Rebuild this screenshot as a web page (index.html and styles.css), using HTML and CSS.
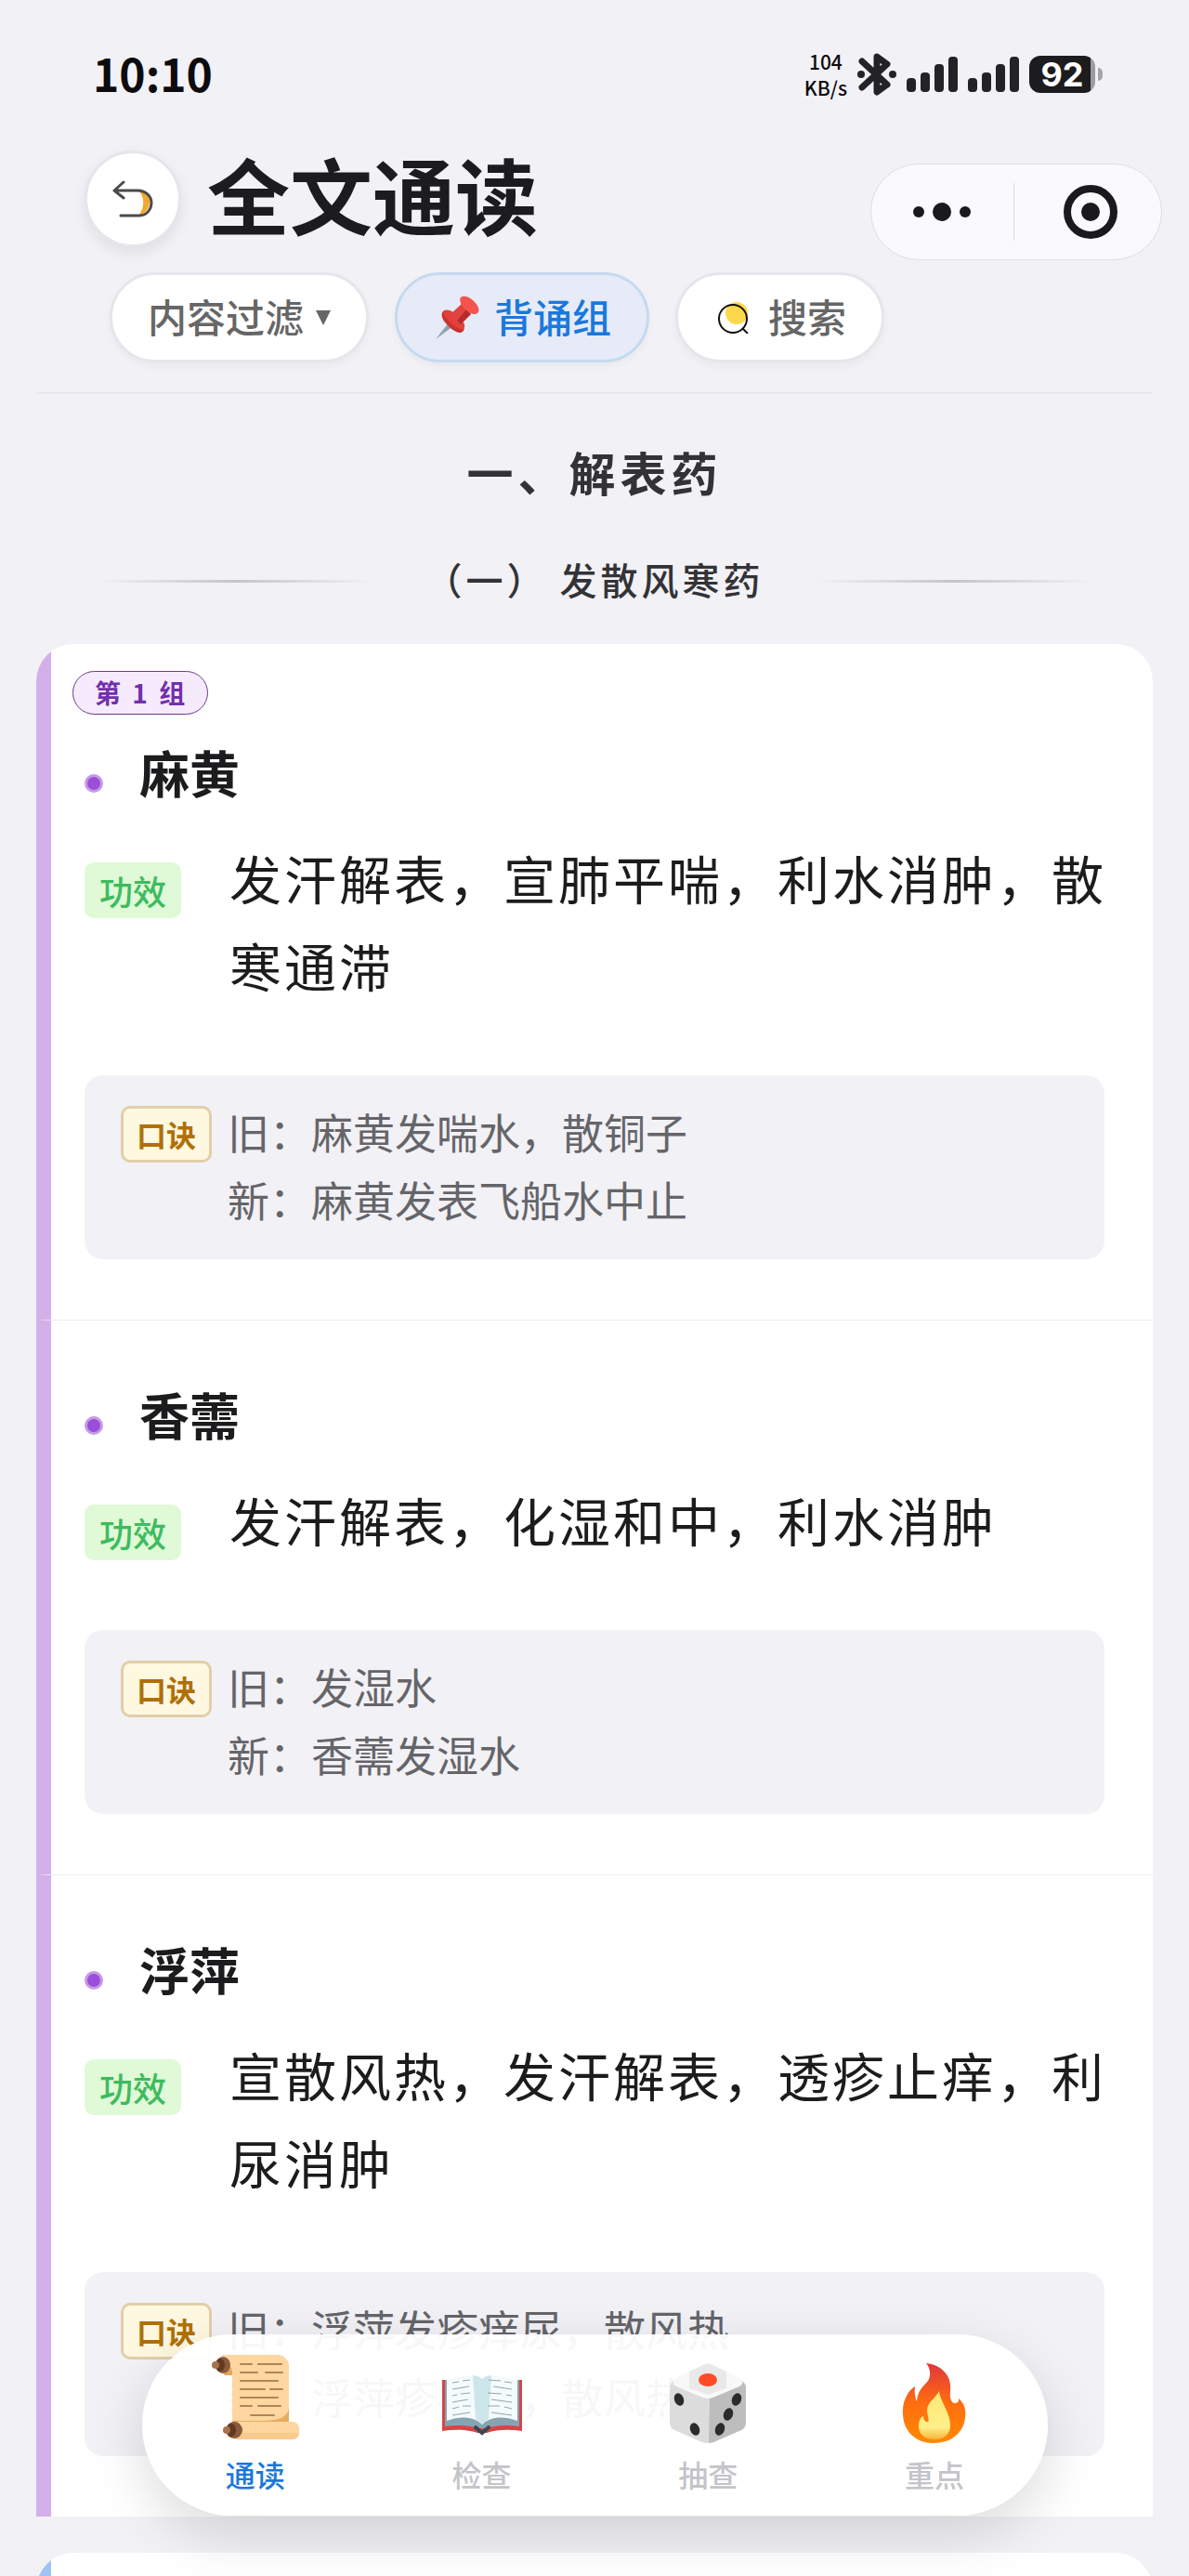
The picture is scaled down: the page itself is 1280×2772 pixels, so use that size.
FILE: index.html
```html
<!DOCTYPE html>
<html lang="zh-CN">
<head>
<meta charset="utf-8">
<meta name="viewport" content="width=device-width, initial-scale=1">
<title>全文通读</title>
<link rel="stylesheet" href="styles.css">
</head>
<body>
<div class="app">
  <div class="scroll">
    <div class="status">
      <span class="clock">10:10</span>
      <div class="status-right">
        <div class="net"><span>104</span><span>KB/s</span></div>
        <svg class="bt" width="42" height="46" viewBox="0 0 42 46" aria-hidden="true"><path d="M5 9 L32 34 L21 42 V4 L32 12 L5 37" fill="none" stroke="#232325" stroke-width="7" stroke-linecap="round" stroke-linejoin="round"/><circle cx="4" cy="23" r="4" fill="#232325"/><circle cx="38" cy="23" r="4" fill="#232325"/></svg>
        <svg class="signal" width="55" height="38" viewBox="0 0 55 38" aria-hidden="true"><g fill="#232325"><rect y="23" width="10" height="15" rx="4"/><rect x="15" y="17" width="10" height="21" rx="4"/><rect x="30" y="8" width="10" height="30" rx="4"/><rect x="45" width="10" height="38" rx="4"/></g></svg>
        <svg class="signal" width="55" height="38" viewBox="0 0 55 38" aria-hidden="true"><g fill="#232325"><rect y="23" width="10" height="15" rx="4"/><rect x="15" y="17" width="10" height="21" rx="4"/><rect x="30" y="8" width="10" height="30" rx="4"/><rect x="45" width="10" height="38" rx="4"/></g></svg>
        <div class="battery"><span class="level">92</span><span class="nub"></span></div>
      </div>
    </div>

    <header class="header">
      <div class="title-row">
        <button class="back" type="button" aria-label="返回">
          <svg width="44" height="40" viewBox="0 0 44 40" aria-hidden="true"><path d="M27 10 C37 11 41 18 40 24 C39 32 34 37 29 37 C35 28 35 17 27 10Z" fill="#f0a92e"/><path d="M12 2 L2 11 L12 19 M2 11 H27 C37 11 42 18 42 24 C42 31 37 38 29 38 H9" fill="none" stroke="#4a4a4c" stroke-width="3" stroke-linecap="round" stroke-linejoin="round"/></svg>
        </button>
        <h1 class="title">全文通读</h1>
        <div class="capsule">
          <button type="button" aria-label="更多"><svg width="64" height="24" viewBox="0 0 64 24" aria-hidden="true"><circle cx="7" cy="12" r="6"/><circle cx="32" cy="12" r="10"/><circle cx="57" cy="12" r="6"/></svg></button>
          <button type="button" aria-label="关闭"><svg width="58" height="58" viewBox="0 0 58 58" aria-hidden="true"><circle cx="29" cy="29" r="25" fill="none" stroke="#1a1a1c" stroke-width="8"/><circle cx="29" cy="29" r="10"/></svg></button>
        </div>
      </div>
      <div class="chips">
        <button class="chip" type="button">内容过滤<svg class="caret" width="16" height="16" viewBox="0 0 16 16" aria-hidden="true"><path d="M0 0H16L8 16Z" fill="#666"/></svg></button>
        <button class="chip chip-active" type="button">
          <svg class="pin" width="48" height="48" viewBox="0 0 48 48" aria-hidden="true"><path d="M16 28 L1 47 L20 33Z" fill="#8fa3ad"/><path d="M9 17 C14 15 20 20 26 25 C31 30 34 35 30 39 C26 42 18 37 13 31 C8 26 6 20 9 17Z" fill="#c9332f"/><path d="M10 16 C15 14 21 18 26 23 C31 28 34 32 31 36 C26 37 21 33 16 28 C11 23 8 19 10 16Z" fill="#e53f3b"/><path d="M17 20 L29 9 L39 20 L28 31 C24 30 18 25 17 20Z" fill="#e04440"/><path d="M28 31 L39 20 L34 15 L24 27Z" fill="#b92b2b"/><path d="M28 2 C32 -1 38 2 42 6 C47 11 49 16 46 19 C42 22 36 18 32 14 C28 10 26 5 28 2Z" fill="#f4534e"/></svg>背诵组</button>
        <button class="chip" type="button">
          <svg class="lens" width="34" height="34" viewBox="0 0 34 34" aria-hidden="true"><circle cx="20" cy="12" r="12" fill="#fbd94b"/><circle cx="16" cy="18" r="15" fill="none" stroke="#111" stroke-width="2"/><path d="M26 28L32 34" stroke="#111" stroke-width="2"/></svg>搜索</button>
      </div>
    </header>

    <main class="content">
      <h2 class="chapter">一、解表药</h2>
      <h3 class="section"><span>（一） 发散风寒药</span></h3>

      <section class="card purple">
        <div class="group"><span class="group-tag">第 1 组</span></div>
        <article class="item">
          <h4 class="name">麻黄</h4>
          <div class="effect"><span class="tag">功效</span><p>发汗解表，宣肺平喘，利水消肿，散寒通滞</p></div>
          <div class="rhyme"><span class="rhyme-tag">口诀</span><p>旧：麻黄发喘水，散铜子<br>新：麻黄发表飞船水中止</p></div>
        </article>
        <article class="item">
          <h4 class="name">香薷</h4>
          <div class="effect"><span class="tag">功效</span><p>发汗解表，化湿和中，利水消肿</p></div>
          <div class="rhyme"><span class="rhyme-tag">口诀</span><p>旧：发湿水<br>新：香薷发湿水</p></div>
        </article>
        <article class="item">
          <h4 class="name">浮萍</h4>
          <div class="effect"><span class="tag">功效</span><p>宣散风热，发汗解表，透疹止痒，利尿消肿</p></div>
          <div class="rhyme"><span class="rhyme-tag">口诀</span><p>旧：浮萍发疹痒尿，散风热<br>新：浮萍疹痒尿，散风热</p></div>
        </article>
      </section>
      <section class="card blue"></section>
    </main>
  </div>

  <nav class="tabs">
    <a class="tab tab-active" href="#read">
      <svg width="100" height="100" viewBox="0 0 100 100" aria-hidden="true"><path d="M14 2 H76 C82 4 86 8 86 14 V76 H25 V24 H16Z" fill="#ffd6a0"/><path d="M86 60 C84 70 74 72 62 73 H25 V78 H86Z" fill="#e5ac62"/><path d="M14 15 C20 12 25 12 25 24 H17Z" fill="#e0a45c"/><rect x="26" y="74" width="71" height="19" rx="7" fill="#ffd6a0"/><path d="M26 86 H97 C96 91 94 93 90 93 H30Z" fill="#f8cb8d"/><g fill="#8a5a3c"><ellipse cx="15" cy="13" rx="8" ry="9"/><ellipse cx="27" cy="83" rx="9" ry="9"/></g><g fill="#60391f"><ellipse cx="12" cy="13" rx="5" ry="7"/><ellipse cx="24" cy="83" rx="5" ry="7"/></g><g fill="#a9714b"><circle cx="7" cy="13" r="4"/><circle cx="19" cy="83" r="4"/></g><path d="M34 12H46M53 12H78M34 21H52M61 21H79M34 30H74M34 39H60M66 39H79M34 48H74M34 57H46M53 57H77M45 67H70" stroke="#ae8557" stroke-width="2" stroke-linecap="round"/></svg>
      <span>通读</span>
    </a>
    <a class="tab" href="#check">
      <svg width="100" height="100" viewBox="0 0 100 100" aria-hidden="true"><path d="M7 29 H93 V84 C80 82 66 82 55 86 H45 C34 82 20 82 7 84Z" fill="#d64545"/><path d="M10 29 H90 V79 C76 77 64 78 55 81 H45 C36 78 24 77 10 79Z" fill="#87a3b2"/><path d="M12 29 C28 24 42 23 50 28 C58 23 72 24 88 29 V73 C72 67 58 69 50 77 C42 69 28 67 12 73Z" fill="#f4fbfc"/><path d="M40 24 C46 24 50 28 50 28 C50 28 54 24 60 24 L57 71 L50 77 L43 71Z" fill="#cde6ec"/><path d="M43 80 L50 86 L57 80" fill="none" stroke="#3a4650" stroke-width="4" stroke-linecap="round"/><path d="M18 32L25 31M29 30L37 29M18 39L36 36M18 46L23 45M27 44L37 43M18 53L35 50M18 60L25 58M29 57L38 57M18 67L37 64M82 32L74 31M70 30L57 29M82 39L62 36M82 46L76 45M71 44L56 43M82 53L60 50M82 60L74 58M69 57L56 57M82 67L60 64" fill="none" stroke="#9aa3a8" stroke-width="1"/></svg>
      <span>检查</span>
    </a>
    <a class="tab" href="#draw">
      <svg width="100" height="100" viewBox="0 0 100 100" aria-hidden="true"><path d="M44 13 Q50 10 56 13 L86 29 Q91 32 91 38 V75 Q91 80 86 83 L56 96 Q50 98 44 96 L14 83 Q9 80 9 75 V38 Q9 32 14 29Z" fill="#dcdcdc"/><path d="M52 50 Q52 47 56 45 L87 31 Q91 33 91 38 V75 Q91 80 86 83 L56 96 L51 97Z" fill="#bdbdbd"/><path d="M44 13 Q50 10 56 13 L84 27 Q91 32 84 36 L58 47 Q50 51 42 47 L16 36 Q9 32 16 27Z" fill="#f8f8f8"/><path d="M30 20 L50 11 L70 20 V38 L50 45 L30 38Z" fill="#e9e9e9"/><ellipse cx="50" cy="29" rx="10" ry="7" fill="#ff4b26"/><g fill="#2b2b2b"><ellipse cx="19" cy="50" rx="5" ry="7" transform="rotate(-20 19 50)"/><ellipse cx="36" cy="82" rx="5" ry="7" transform="rotate(-20 36 82)"/><ellipse cx="81" cy="50" rx="5" ry="7" transform="rotate(20 81 50)"/><ellipse cx="72" cy="66" rx="5" ry="7" transform="rotate(20 72 66)"/><ellipse cx="63" cy="82" rx="5" ry="7" transform="rotate(20 63 82)"/></g></svg>
      <span>抽查</span>
    </a>
    <a class="tab" href="#key">
      <svg width="100" height="100" viewBox="0 0 100 100" aria-hidden="true"><defs><linearGradient id="flame" x1="0" y1="1" x2="0" y2="0"><stop offset="0" stop-color="#ff8a00"/><stop offset=".5" stop-color="#ff6d10"/><stop offset="1" stop-color="#e0353c"/></linearGradient><linearGradient id="core" x1="0" y1="1" x2="0" y2="0"><stop offset="0" stop-color="#f5b43a"/><stop offset=".25" stop-color="#fff08a"/><stop offset="1" stop-color="#ffe873"/></linearGradient></defs><path d="M41 11 C58 13 69 25 67 41 C66 50 69 55 73 54 C77 53 76 50 76 49 C83 55 84 62 83 70 C81 87 67 97 49 97 C30 97 16 84 16 65 C15 52 22 40 29 36 C28 45 30 50 31 52 C32 40 38 36 43 30 C47 24 45 15 41 11Z" fill="url(#flame)"/><path d="M55 41 C56 52 67 64 67 78 C67 88 60 93 50 93 C39 93 33 87 33 79 C33 73 35 69 38 68 C38 72 41 75 43 74 C45 72 42 67 42 61 C43 52 51 49 55 41Z" fill="url(#core)"/></svg>
      <span>重点</span>
    </a>
  </nav>
</div>
</body>
</html>
```
FILE: styles.css
```css
*,
*::before,
*::after { box-sizing: border-box; }

body {
  margin: 0;
  background: #f2f1f6;
  color: #1c1c1e;
  font-family: "Noto Sans CJK SC", "Noto Sans", sans-serif;
}

h1, h2, h3, h4, p { margin: 0; }

button {
  margin: 0;
  padding: 0;
  border: 0;
  background: none;
  font: inherit;
  color: inherit;
}

svg { display: block; flex: none; }

.app {
  position: relative;
  height: 100vh;
  overflow: hidden;
}

.scroll {
  height: 100%;
  overflow-y: auto;
  scrollbar-width: none;
}

/* Status bar */
.status {
  display: flex;
  align-items: center;
  justify-content: space-between;
  height: 160px;
  padding: 0 93px 0 100px;
}

.clock {
  padding-bottom: 4px;
  font-size: 48px;
  line-height: 60px;
  font-weight: 600;
  color: #0c0c0e;
}

.status-right { display: flex; align-items: center; gap: 11px; }

.net {
  display: flex;
  flex-direction: column;
  align-items: center;
  font-size: 21px;
  line-height: 28px;
  font-weight: 500;
  color: #0c0c0e;
}

.battery { display: flex; align-items: center; gap: 3px; }

.level {
  width: 71px;
  height: 40px;
  border-radius: 12px;
  background: linear-gradient(90deg, #1c1c1e 66px, #9c9ca0 66px);
  color: #fff;
  font-family: "Inter", sans-serif;
  font-size: 36px;
  font-weight: 700;
  line-height: 40px;
  text-align: center;
}

.nub { width: 5px; height: 14px; border-radius: 0 6px 6px 0; background: #a5a5a9; }

/* Header */
.header {
  margin: 0 39px;
  padding-bottom: 32px;
  border-bottom: 2px solid #e9e8ee;
}

.title-row { display: flex; align-items: center; margin: 0 -10px 0 52px; height: 108px; }

.back {
  display: flex;
  align-items: center;
  justify-content: center;
  width: 104px;
  height: 104px;
  border: 3px solid #e6e6ea;
  border-radius: 50%;
  background: #fff;
  box-shadow: 0 6px 16px rgba(0, 0, 0, 0.08);
}

.title {
  margin-left: 28px;
  padding-bottom: 12px;
  font-size: 89px;
  line-height: 104px;
  font-weight: 700;
}

.capsule {
  display: flex;
  align-items: center;
  width: 314px;
  height: 104px;
  margin: 28px 0 0 auto;
  border: 1px solid #dedee2;
  border-radius: 52px;
  background: #fafafc;
  fill: #1a1a1c;
}

.capsule button {
  display: flex;
  flex: 1;
  align-items: center;
  justify-content: center;
  height: 62px;
}

.capsule button + button { padding-left: 6px; border-left: 1px solid #dcdce0; }

.chips { display: flex; gap: 28px; margin-top: 25px; padding-left: 79px; }

.chip {
  display: flex;
  align-items: center;
  height: 97px;
  padding: 0 38px 4px;
  border: 3px solid #e6e6ea;
  border-radius: 49px;
  background: #fff;
  box-shadow: 0 4px 8px rgba(0, 0, 0, 0.04);
  color: #666;
  font-size: 42px;
  font-weight: 500;
}

.chip-active { border-color: #c4daf0; background: #e6ebf7; color: #1a78dc; }

.chip svg { margin-top: 4px; }
.chip .caret { margin-left: 13px; }
.chip .pin { margin-right: 16px; margin-left: 2px; }
.chip .lens { margin-right: 20px; margin-left: 5px; }

/* Content */
.content { display: flex; flex-direction: column; margin: 0 39px; }

.chapter {
  margin-top: 53px;
  font-size: 50px;
  line-height: 60px;
  font-weight: 700;
  letter-spacing: 5px;
  text-align: center;
  color: #333336;
}

.section {
  display: flex;
  align-items: center;
  gap: 55px;
  margin: 58px 0 38px;
  padding: 0 65px;
  font-size: 40px;
  line-height: 56px;
  font-weight: 500;
  letter-spacing: 4px;
  color: #333336;
}

.section span { padding-bottom: 4px; }

.section::before,
.section::after {
  content: "";
  flex: 1;
  height: 3px;
  background: linear-gradient(90deg, transparent, #c4c4c9, transparent);
}

.card {
  overflow: hidden;
  border-radius: 40px 40px 0 0;
  background: #fff;
}

.purple { --bar: #d3b0ea; }

.blue {
  --bar: #a0c4f8;
  min-height: 100px;
  margin-top: 39px;
  background: linear-gradient(90deg, var(--bar) 16px, #fff 16px);
}

.group { padding: 29px 23px 22px; border-left: 16px solid var(--bar); }

.group-tag {
  display: block;
  width: max-content;
  padding: 0 21px 0 23px;
  border: 1px solid #6f3b8c;
  border-radius: 24px;
  background: #f5ebfc;
  font-size: 28px;
  line-height: 45px;
  font-weight: 700;
  letter-spacing: 3px;
  color: #7230ac;
}

.item { padding: 61px 52px 65px 36px; border-left: 16px solid var(--bar); }
.item + .item { border-top: 1px solid #ececf0; }
.group + .item { padding-top: 0; }

.name {
  display: flex;
  align-items: center;
  gap: 39px;
  font-size: 54px;
  line-height: 80px;
  font-weight: 700;
}

.name::before {
  content: "";
  width: 20px;
  height: 20px;
  margin-top: 24px;
  border: 3px solid #c59ae6;
  border-radius: 50%;
  background: #9b4fd8;
}

.effect {
  display: flex;
  align-items: flex-start;
  gap: 52px;
  margin: 26px -3px 0 0;
  font-size: 56px;
  line-height: 94px;
  letter-spacing: 3px;
}

.effect p { flex: 1; }

.tag {
  flex: none;
  margin-top: 31px;
  padding: 0 16px;
  border-radius: 10px;
  background: #e0f9d6;
  font-size: 36px;
  line-height: 60px;
  font-weight: 500;
  letter-spacing: 0;
  color: #3dbb60;
}

.rhyme {
  display: flex;
  align-items: flex-start;
  gap: 17px;
  margin-top: 72px;
  padding: 24px 39px 28px;
  border-radius: 20px;
  background: #f2f1f6;
  font-size: 45px;
  line-height: 73px;
  color: #656569;
}

.rhyme-tag {
  flex: none;
  margin-top: 9px;
  padding: 0 14px;
  border: 3px solid #e2cfa8;
  border-radius: 10px;
  background: #fff8e1;
  font-size: 32px;
  line-height: 55px;
  font-weight: 700;
  color: #b07008;
}

/* Floating tab bar */
.tabs {
  position: absolute;
  right: 152px;
  bottom: 65px;
  left: 153px;
  display: flex;
  padding: 20px 0 23px;
  border-radius: 98px;
  background: rgba(255, 255, 255, 0.95);
  box-shadow: 0 20px 60px rgba(0, 0, 0, 0.14);
}

.tab {
  display: flex;
  flex: 1;
  flex-direction: column;
  align-items: center;
  gap: 8px;
  font-size: 32px;
  line-height: 44px;
  font-weight: 500;
  color: #c4c4c8;
  text-decoration: none;
}

.tab-active { color: #1a78dc; }
```
